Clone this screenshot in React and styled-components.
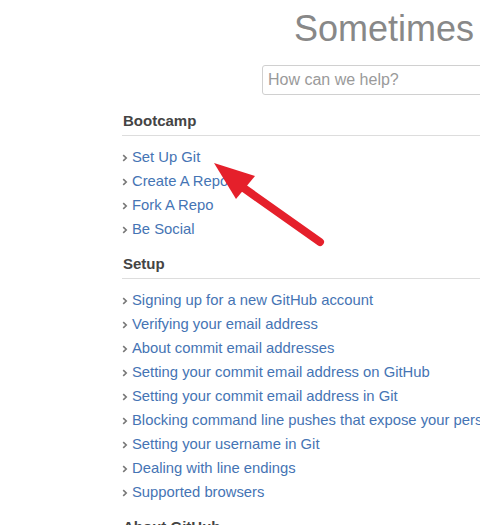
import React from "react";
import styled, { createGlobalStyle } from "styled-components";

const Global = createGlobalStyle`
  html, body { margin: 0; padding: 0; background: #fff; }
  body {
    font-family: "Liberation Sans", Arial, sans-serif;
    overflow: hidden;
    width: 480px;
    height: 525px;
  }
`;

const Page = styled.div`
  position: relative;
  width: 480px;
  height: 525px;
  overflow: hidden;
`;

const Content = styled.div`
  width: 700px;
  padding-left: 122px;
  padding-top: 9px;
`;

const Title = styled.h1`
  margin: 0 0 0 172px;
  font-size: 36px;
  line-height: 40px;
  font-weight: normal;
  color: #888;
`;

const Search = styled.input`
  display: block;
  box-sizing: border-box;
  margin: 16px 0 0 140px;
  width: 320px;
  height: 30px;
  padding: 0 5px;
  border: 1px solid #d0d0d0;
  border-radius: 3px;
  font-family: "Liberation Sans", Arial, sans-serif;
  font-size: 16px;
  color: #333;
  outline: none;
  &::placeholder { color: #9a9a9a; }
`;

const Section = styled.section`
  margin-top: ${(p) => p.$top}px;
`;

const SectionTitle = styled.h3`
  margin: 0;
  padding: 0 0 4px 1px;
  font-size: 15px;
  line-height: 20px;
  font-weight: bold;
  color: #444;
  border-bottom: 1px solid #ddd;
`;

const List = styled.ul`
  list-style: none;
  margin: 9px 0 0;
  padding: 0;
`;

const Item = styled.li`
  display: flex;
  align-items: center;
  height: 24px;
  white-space: nowrap;
`;

const Chevron = styled.svg`
  width: 6px;
  height: 8px;
  margin-right: 4px;
  margin-top: 1px;
  flex: none;
`;

const Link = styled.a`
  font-size: 14.8px;
  line-height: 24px;
  color: #4574b4;
  text-decoration: none;
`;

const Arrow = styled.svg`
  position: absolute;
  left: 0;
  top: 0;
  pointer-events: none;
`;

const sections = [
  {
    title: "Bootcamp",
    top: 16,
    links: ["Set Up Git", "Create A Repo", "Fork A Repo", "Be Social"],
  },
  {
    title: "Setup",
    top: 13,
    links: [
      "Signing up for a new GitHub account",
      "Verifying your email address",
      "About commit email addresses",
      "Setting your commit email address on GitHub",
      "Setting your commit email address in Git",
      "Blocking command line pushes that expose your personal email address",
      "Setting your username in Git",
      "Dealing with line endings",
      "Supported browsers",
    ],
  },
  { title: "About GitHub", top: 13, links: [] },
];

export default function App() {
  return (
    <Page>
      <Global />
      <Content>
        <Title>Sometimes</Title>
        <Search placeholder="How can we help?" />
        {sections.map((s) => (
          <Section key={s.title} $top={s.top}>
            <SectionTitle>{s.title}</SectionTitle>
            {s.links.length > 0 && (
              <List>
                {s.links.map((l) => (
                  <Item key={l}>
                    <Chevron viewBox="0 0 6 8">
                      <polyline
                        points="1.2,1.2 4.2,4 1.2,6.8"
                        fill="none"
                        stroke="#777"
                        strokeWidth="1.6"
                      />
                    </Chevron>
                    <Link href="#">{l}</Link>
                  </Item>
                ))}
              </List>
            )}
          </Section>
        ))}
      </Content>
      <Arrow width="480" height="525" viewBox="0 0 480 525">
        <line
          x1="238"
          y1="184"
          x2="320"
          y2="242"
          stroke="#e5202b"
          strokeWidth="8"
          strokeLinecap="round"
        />
        <polygon points="214,163 255,176 236,199" fill="#e5202b" />
      </Arrow>
    </Page>
  );
}
